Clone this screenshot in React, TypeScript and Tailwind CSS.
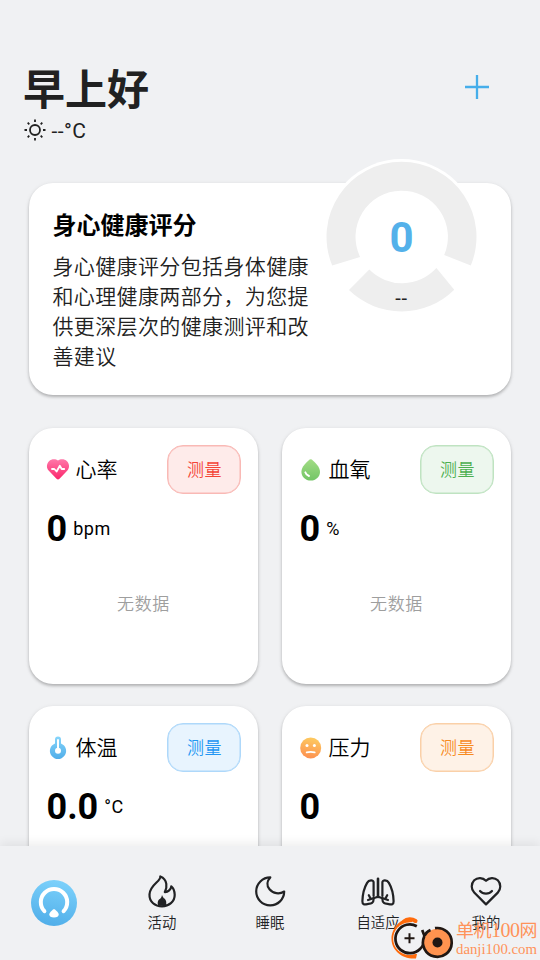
import type { ReactNode } from "react";

interface Metric {
  label: string;
  value: string;
  unit?: string;
  icon: ReactNode;
  buttonClass: string;
}

function HeartRateIcon() {
  return (
    <svg width="24" height="24" viewBox="0 0 24 24">
      <defs>
        <linearGradient id="heart" x1="0" y1="0" x2="0" y2="1">
          <stop offset="0" stopColor="#ff78a9" />
          <stop offset="1" stopColor="#fb256b" />
        </linearGradient>
      </defs>
      <path
        d="M12 2.6C9.6 0.8 5.6 0.8 3 3.2C0.4 5.8 0.3 9.8 2.6 12.6L10.5 20.7Q12 22.2 13.5 20.7L21.4 12.6C23.7 9.8 23.6 5.8 21 3.2C18.4 0.8 14.4 0.8 12 2.6Z"
        fill="url(#heart)"
      />
      <path d="M6 11H8.3L10.6 13.5L13.8 7.7L15.7 11H18.2" fill="none" stroke="#fff" strokeWidth="1.8" strokeLinecap="round" strokeLinejoin="round" />
    </svg>
  );
}

function OxygenIcon() {
  return (
    <svg width="24" height="24" viewBox="0 0 24 24">
      <defs>
        <linearGradient id="drop" x1="0" y1="0" x2="0" y2="1">
          <stop offset="0" stopColor="#a2dc85" />
          <stop offset="1" stopColor="#73c566" />
        </linearGradient>
      </defs>
      <path d="M10.6 1.5Q11.7 0.8 12.8 1.5C16.2 4.3 21 9.1 21 13.8C21 18.9 17 22.6 11.7 22.6S2.4 18.9 2.4 13.8C2.4 9.1 7.2 4.3 10.6 1.5Z" fill="url(#drop)" />
      <path d="M6.3 14.3C6.8 16.2 8 17.2 10 18" fill="none" stroke="#fff" strokeWidth="1.9" strokeLinecap="round" />
    </svg>
  );
}

function TemperatureIcon() {
  return (
    <svg width="24" height="24" viewBox="0 0 24 24">
      <defs>
        <linearGradient id="thermo" x1="0" y1="0" x2="0" y2="1">
          <stop offset="0" stopColor="#86d5fb" />
          <stop offset="1" stopColor="#51aee9" />
        </linearGradient>
      </defs>
      <path d="M9 3.6A3 3 0 0 1 15 3.6V7.4A8.1 8.1 0 1 1 9 7.4Z" fill="url(#thermo)" />
      <path d="M12 4V13.6" stroke="#fff" strokeWidth="2" strokeLinecap="round" />
      <circle cx="12" cy="14.8" r="3" fill="#fff" />
    </svg>
  );
}

function StressIcon() {
  return (
    <svg width="24" height="24" viewBox="0 0 24 24">
      <defs>
        <linearGradient id="face" x1="0.6" y1="0" x2="0.4" y2="1">
          <stop offset="0" stopColor="#fdcb60" />
          <stop offset="1" stopColor="#fd9050" />
        </linearGradient>
      </defs>
      <circle cx="11.7" cy="11.9" r="10.5" fill="url(#face)" />
      <circle cx="8" cy="9.6" r="1.5" fill="#fff" />
      <circle cx="15.4" cy="9.6" r="1.5" fill="#fff" />
      <path d="M7.7 16.4Q11.7 15.2 15.7 16.4" fill="none" stroke="#fff" strokeWidth="1.8" strokeLinecap="round" />
    </svg>
  );
}

const metrics: Metric[] = [
  {
    label: "心率",
    value: "0",
    unit: "bpm",
    icon: <HeartRateIcon />,
    buttonClass: "bg-[#feebea] border-[#f9b9b5] text-[#f44336] shadow-[inset_0_0_0_0.5px_#f9b9b5]",
  },
  {
    label: "血氧",
    value: "0",
    unit: "%",
    icon: <OxygenIcon />,
    buttonClass: "bg-[#edf7ee] border-[#bfe3c1] text-[#4caf50] shadow-[inset_0_0_0_0.5px_#bfe3c1]",
  },
  {
    label: "体温",
    value: "0.0",
    unit: "°C",
    icon: <TemperatureIcon />,
    buttonClass: "bg-[#e8f4fe] border-[#aed8fa] text-[#2196f3] shadow-[inset_0_0_0_0.5px_#aed8fa]",
  },
  {
    label: "压力",
    value: "0",
    icon: <StressIcon />,
    buttonClass: "bg-[#fef2e7] border-[#fad0a8] text-[#f78b1f] shadow-[inset_0_0_0_0.5px_#fad0a8]",
  },
];

function MetricCard({ label, value, unit, icon, buttonClass }: Metric) {
  return (
    <div className="h-[256px] rounded-[24px] bg-white pl-[17px] pr-[17px] pt-[17px] shadow-[0_2px_3px_rgba(0,0,0,0.22),0_1px_5px_rgba(0,0,0,0.08)]">
      <div className="flex h-[49px] items-center">
        {icon}
        <span className="ml-[5.5px] text-[21px] font-[350] leading-[30px] text-black">{label}</span>
        <button
          className={`ml-auto h-[49px] w-[74px] rounded-[16px] border pl-[1px] pt-[3px] text-[17px] font-[350] tracking-[0.5px] ${buttonClass}`}
        >
          测量
        </button>
      </div>
      <div className="mt-[14px] flex h-[42px] items-center text-black">
        <span className="ml-[0.5px] text-[36px] font-bold leading-[42px]">{value}</span>
        {unit && <span className="ml-[6px] text-[18px] leading-[24px] tracking-[0.6px]">{unit}</span>}
      </div>
      <div className="mt-[41px] text-center text-[17px] font-[350] leading-[26px] tracking-[0.6px] text-[#9e9e9e]">
        无数据
      </div>
    </div>
  );
}

function ScoreGauge() {
  return (
    <div className="absolute left-[292px] top-[-27px] h-[161px] w-[161px]">
      <svg width="161" height="161" viewBox="0 0 161 161">
        <circle cx="80.5" cy="80.8" r="77.8" fill="#fff" />
        <path d="M11.2 109.5A75 75 0 1 1 149.8 109.5L123.2 99A46.2 46.2 0 1 0 39.1 100.9Z" fill="#eee" />
        <path d="M28 134A75 75 0 0 0 133.2 133.7L115.4 112A46.2 46.2 0 0 1 48.3 113.6Z" fill="#eee" />
      </svg>
      <div className="absolute inset-x-0 top-[57px] text-center text-[42px] font-bold leading-[50px] text-[#54b1ea]">
        0
      </div>
      <div className="absolute inset-x-0 top-[130px] text-center text-[20px] leading-[24px] tracking-[0.7px] text-[#222]">--</div>
    </div>
  );
}

function NavItem({ label, children }: { label: string; children: ReactNode }) {
  return (
    <div className="flex w-[108px] flex-col items-center pt-[27px] text-[#212224]">
      <svg
        width="36"
        height="36"
        viewBox="0 0 36 36"
        fill="none"
        stroke="currentColor"
        strokeWidth="2.2"
        strokeLinecap="round"
        strokeLinejoin="round"
      >
        {children}
      </svg>
      <span className="mt-[5px] text-[14.4px] font-[350] leading-[20px]">{label}</span>
    </div>
  );
}

function BottomNav() {
  return (
    <nav className="relative flex h-[114px] w-full shrink-0 bg-[#f0f1f3] shadow-[0_-3px_10px_rgba(0,0,0,0.07)]">
      <div className="flex w-[108px] justify-center pt-[33px]">
        <svg width="48" height="48" viewBox="0 0 48 48">
          <defs>
            <linearGradient id="home" x1="0.6" y1="0" x2="0.4" y2="1">
              <stop offset="0" stopColor="#7cd1fb" />
              <stop offset="1" stopColor="#50aee9" />
            </linearGradient>
          </defs>
          <circle cx="24" cy="24" r="23" fill="url(#home)" />
          <path d="M14.4 32.2A13.2 13.2 0 1 1 33.6 32.2" fill="none" stroke="#fff" strokeWidth="4" strokeLinecap="round" />
          <path d="M24 30C24.6 30 28.7 33.4 28.7 35.4C28.7 37.5 27 38.4 24 38.4S19.3 37.5 19.3 35.4C19.3 33.4 23.4 30 24 30Z" fill="#fff" />
        </svg>
      </div>
      <NavItem label="活动">
        <path d="M16.3 3.5C17.2 8.3 6 11.5 5.5 21.4C5.1 29 11.2 33.4 18 33.4S30.8 28.7 30.7 21.8C30.6 17.7 29.2 14.8 27.3 13.3C27.1 16.1 24 19.3 20.8 19.1C23.2 15 23.9 6.5 16.3 3.5Z" />
        <path d="M18 22C18.8 24 19.4 25 20.8 25.8C22.3 27.5 22.8 30 21.8 32.8H14.2C13.3 30.4 13.5 28 15 26.4C16.8 25.6 17.6 24 18 22Z" fill="currentColor" stroke="none" />
      </NavItem>
      <NavItem label="睡眠">
        <path d="M18.3 4.4A14 14 0 1 0 32.2 18.5C27.5 21.6 20.9 20.6 17.5 16.3C14.4 12.6 15 7.8 18.3 4.4Z" />
      </NavItem>
      <NavItem label="自适应">
        <path d="M18 5.8V24" strokeWidth="2.6" />
        <path d="M13.6 23V9.3C13.6 6.8 8.9 6.7 7.1 9.9C4.2 14.8 2.6 21.4 2.4 28.2C2.3 31.7 4.3 31.6 7.3 31.1C10.8 30.6 13.6 30.8 13.6 26V24.8" />
        <path d="M22.4 23V9.3C22.4 6.8 27.1 6.7 28.9 9.9C31.8 14.8 33.4 21.4 33.6 28.2C33.7 31.7 31.7 31.6 28.7 31.1C25.2 30.6 22.4 30.8 22.4 26V24.8" />
        <path d="M18 23.8L8 27M18 23.8L28 27M10.7 25.8L8.8 22.2M25.3 25.8L27.2 22.2" />
      </NavItem>
      <NavItem label="我的">
        <path d="M18 7.8C14.7 4.3 9.5 4.1 6.2 7.3C2.8 10.8 3 16.3 6.2 19.6L18 31.4L29.8 19.6C33 16.3 33.2 10.8 29.8 7.3C26.5 4.1 21.3 4.3 18 7.8Z" />
        <path d="M12 18C15 21.5 21 21.5 24 18" />
      </NavItem>
      <SiteBadge />
    </nav>
  );
}

function SiteBadge() {
  return (
    <div className="absolute left-[389px] top-[70px] flex h-[44px] w-[151px] font-['Liberation_Serif','Noto_Sans_CJK_SC',serif] text-[#ff935a]">
      <svg width="67" height="44" viewBox="0 0 67 44" className="shrink-0" fill="none">
        <path d="M25 2.5C15 0 2.5 10 2.5 23C2.5 34 13 43.5 27 42.5L28 38C14 39 6 33 6 23C6 14 12 8 23 6Z" fill="#ff6b0b" />
        <path d="M15 5.5C18 2.6 23 2.6 26.5 5" stroke="#ff6b0b" strokeWidth="4" strokeLinecap="round" />
        <circle cx="20.5" cy="22.8" r="16.3" fill="#f0f1f3" />
        <path d="M27.8 10.2A14.4 14.4 0 1 0 31 33Q36.5 28 35.3 19.5L33.2 14" stroke="#201713" strokeWidth="2.7" />
        <path d="M20.5 17.3V27.3M15.5 22.3H25.5" stroke="#201713" strokeWidth="2" />
        <circle cx="48.5" cy="26.5" r="13.7" fill="#ff934f" />
        <path d="M35.3 20Q37 15.8 41.5 14" stroke="#201713" strokeWidth="2.7" />
        <path d="M46 12.2A14.4 14.4 0 1 1 35.2 20.5" stroke="#201713" strokeWidth="2.7" />
        <circle cx="48.5" cy="26.5" r="5" fill="#201713" />
      </svg>
      <div className="flex flex-col whitespace-nowrap">
        <span className="mt-[3px] text-[18px] leading-[22px] tracking-[-0.5px]">
          单机<span className="text-[20px]">100</span>网
        </span>
        <span className="-mt-[1px] text-[14.8px] leading-[16px]">danji100.com</span>
      </div>
    </div>
  );
}

export default function App() {
  return (
    <div className="flex h-[960px] w-[540px] flex-col overflow-hidden bg-[#f0f1f3] font-[Roboto,'Noto_Sans_CJK_SC',sans-serif]">
      <main className="h-[846px] shrink-0 overflow-hidden px-[29px] pt-[61px]">
        <header className="-mx-[6px] flex h-[122px] justify-between">
          <div>
            <h1 className="text-[42px] font-bold leading-[60px] text-[#212121]">早上好</h1>
            <div className="-mt-[3px] flex h-[24px] items-center text-[21px] leading-[24px] text-[#212121]">
              <svg width="22" height="22" viewBox="0 0 22 22" fill="none" stroke="currentColor" strokeWidth="1.8" className="ml-[0.5px]">
                <circle cx="11" cy="11" r="5" />
                <path d="M11 0.5V3M11 19V21.5M0.5 11H3M19 11H21.5M3.7 3.7L5.3 5.3M16.7 16.7L18.3 18.3M3.7 18.3L5.3 16.7M16.7 5.3L18.3 3.7" />
              </svg>
              <span className="ml-[6px] pt-[2px] tracking-[0.4px]">--°C</span>
            </div>
          </div>
          <button className="mr-[28.5px] mt-[14px] h-6 w-6">
            <svg width="24" height="24" viewBox="0 0 24 24" stroke="#46aeea" strokeWidth="2.3">
              <path d="M12 0V24M0 12H24" />
            </svg>
          </button>
        </header>

        <section className="relative h-[212px] rounded-[24px] bg-white pl-[23.5px] pt-[25px] shadow-[0_2px_3px_rgba(0,0,0,0.22),0_1px_5px_rgba(0,0,0,0.08)]">
          <h2 className="text-[24px] font-bold leading-[36px] text-black">身心健康评分</h2>
          <p className="mt-[8px] w-[258px] text-[21px] font-[350] leading-[30px] tracking-[0.375px] text-[#212121]">
            身心健康评分包括身体健康和心理健康两部分，为您提供更深层次的健康测评和改善建议
          </p>
          <ScoreGauge />
        </section>

        <section className="mt-[33px] grid grid-cols-2 gap-x-[24px] gap-y-[22px]">
          {metrics.map((metric) => (
            <MetricCard key={metric.label} {...metric} />
          ))}
        </section>
      </main>
      <BottomNav />
    </div>
  );
}
